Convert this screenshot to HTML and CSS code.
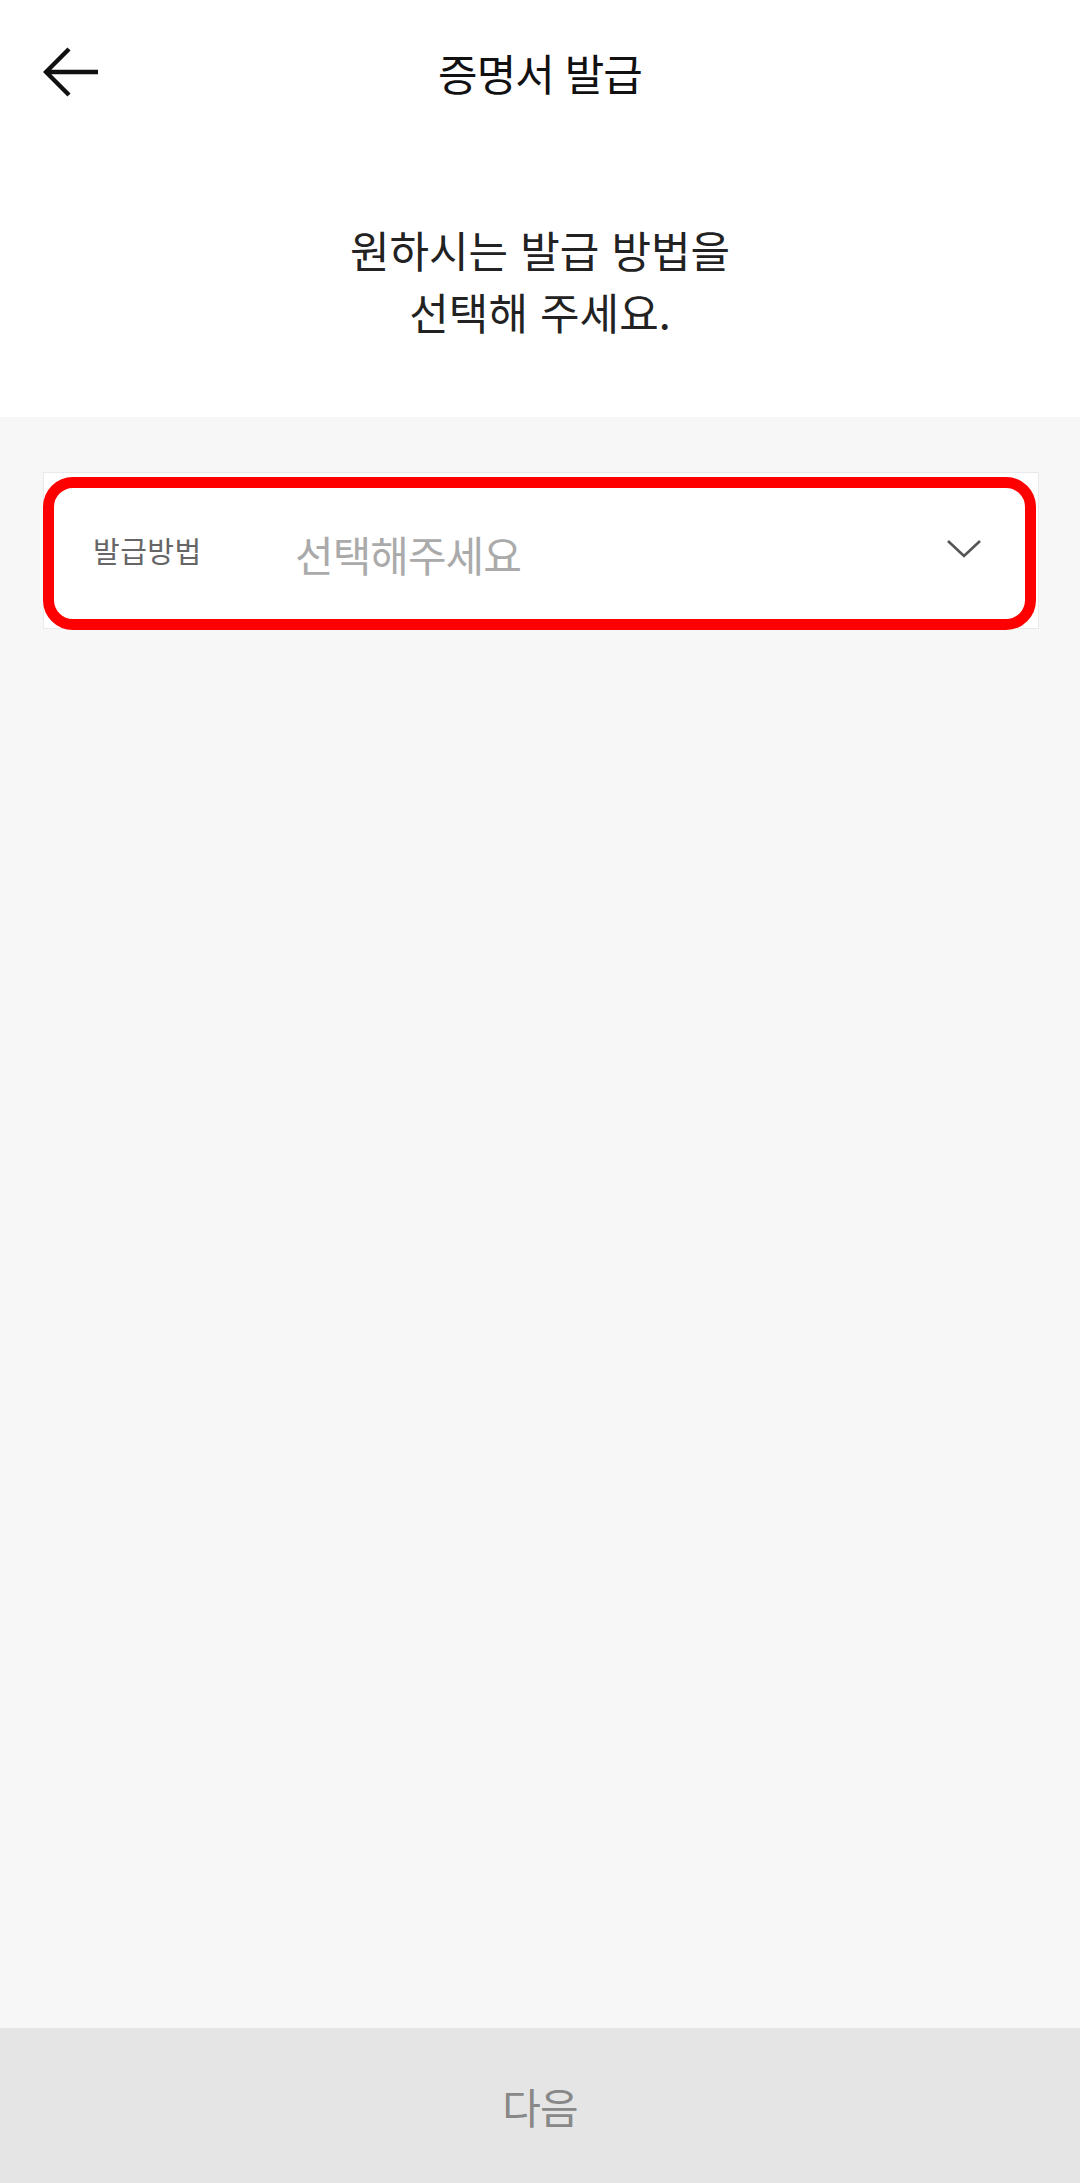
FILE: index.html
```html
<!DOCTYPE html>
<html lang="ko">
<head>
    <meta charset="UTF-8">
    <meta name="viewport" content="width=device-width, initial-scale=1.0">
    <title>증명서 발급</title>
    <link rel="stylesheet" href="styles.css">
</head>
<body>

    <section class="page">
        <header class="top">
            <button class="back" aria-label="뒤로">
                <svg width="56" height="50" viewBox="0 0 56 50">
                    <path d="M26 2 L3 25 L26 48 M3 25 H55" fill="none" stroke="#111" stroke-width="4.4"/>
                </svg>
            </button>
            <h1>증명서 발급</h1>
            <span></span>
        </header>

        <div class="intro">
            <p>원하시는 발급 방법을<br>선택해 주세요.</p>
        </div>

        <div class="content">
            <div class="field">
                <span class="label">발급방법</span>
                <span class="value">선택해주세요</span>
                <svg class="chevron" width="36" height="20" viewBox="0 0 36 20">
                    <path d="M2 2 L18 17 L34 2" fill="none" stroke="#555" stroke-width="2.6"/>
                </svg>
                <div class="mark"></div>
            </div>
        </div>

        <button class="next">다음</button>
    </section>

</body>
</html>
```

FILE: styles.css
```css
* {
    margin: 0;
    padding: 0;
    box-sizing: border-box;
    font-family: "Noto Sans CJK KR", "Noto Sans", sans-serif;
}

body {
    background-color: #fff;
}

section.page {
    min-height: 2183px;
    display: flex;
    flex-direction: column;
}

section.page .top {
    height: 144px;
    display: grid;
    grid-template-columns: 1fr auto 1fr;
    align-items: center;
    padding: 0 43px;
}

section.page .top .back {
    width: 56px;
    height: 50px;
    border: none;
    background: transparent;
    display: flex;
}

section.page .top h1 {
    font-size: 43px;
    font-weight: 400;
    color: #111;
    letter-spacing: -1px;
}

section.page .intro {
    padding: 74px 0 75px;
    text-align: center;
}

section.page .intro p {
    font-size: 43px;
    line-height: 62px;
    color: #222;
}

section.page .content {
    flex: 1;
    background-color: #f7f7f7;
    padding: 55px 41px 0 43px;
}

section.page .field {
    position: relative;
    height: 157px;
    background-color: #fff;
    border: 1px solid #e9e9e9;
    display: flex;
    align-items: center;
    padding: 0 56px 0 49px;
}

section.page .field .label {
    width: 202px;
    font-size: 29px;
    color: #666;
    margin-top: -2px;
    letter-spacing: 0.5px;
}

section.page .field .value {
    flex: 1;
    font-size: 42px;
    color: #aaa;
    letter-spacing: -1px;
    margin-top: 6px;
}

section.page .field .chevron {
    margin-top: -4px;
}

/* red highlight around the select */
section.page .field .mark {
    position: absolute;
    top: 4px;
    left: -1px;
    right: 2px;
    bottom: -2px;
    border: 11px solid #ff0000;
    border-radius: 30px;
}

section.page .next {
    height: 155px;
    border: none;
    background-color: #e5e5e5;
    color: #888;
    font-size: 42px;
    letter-spacing: -1px;
}
```
